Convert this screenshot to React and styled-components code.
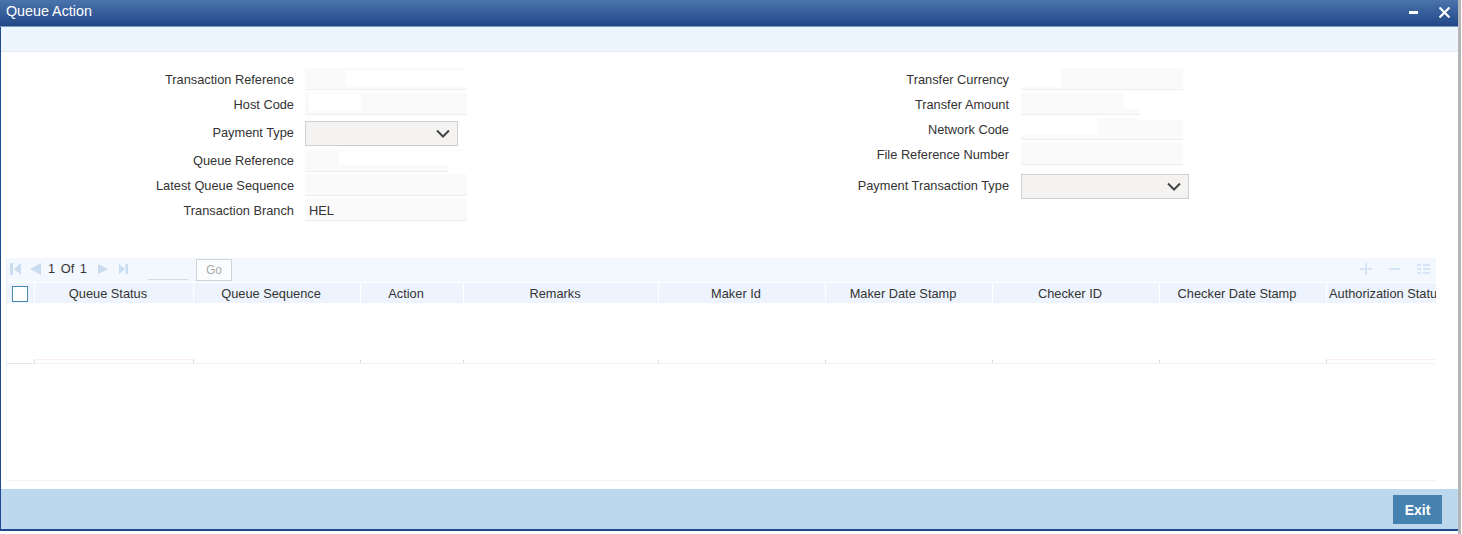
import styled, { createGlobalStyle } from 'styled-components'

const GlobalStyle = createGlobalStyle`
  html, body {
    margin: 0;
    padding: 0;
    background: #fff;
    font-family: "Liberation Sans", Arial, sans-serif;
    color: #333;
  }
`

const Page = styled.div`
  width: 1461px;
  height: 534px;
  box-sizing: border-box;
  overflow: hidden;
  border-right: 3px solid #b4b5b7;
`

const Window = styled.div`
  height: 531px;
  box-sizing: border-box;
  display: flex;
  flex-direction: column;
  border-left: 1px solid #1f4a8f;
  border-bottom: 2px solid #1f4a8f;
`

const TitleBar = styled.header`
  height: 27px;
  box-sizing: border-box;
  flex: none;
  margin-left: -1px;
  padding: 0 8px 4px 6px;
  display: flex;
  align-items: center;
  justify-content: space-between;
  background: linear-gradient(#4a74ab, #214888);
  border-bottom: 1px solid #7d9db5;
  color: #fff;
  font-size: 14.3px;
`

const WindowButtons = styled.div`
  display: flex;
  align-items: center;
  gap: 21px;
  margin-top: 3px;
`

const Band = styled.div`
  height: 24px;
  flex: none;
  background: #edf5fe;
  border-bottom: 1px solid #e4e8ed;
`

const Form = styled.section`
  height: 206px;
  flex: none;
  padding-top: 16px;
  box-sizing: border-box;
  display: flex;
`

const Column = styled.div`
  width: ${p => p.$width}px;
  flex: none;
  display: flex;
  flex-direction: column;
`

const Row = styled.div`
  height: ${p => p.$height}px;
  display: flex;
  align-items: flex-start;
`

const Label = styled.label`
  width: ${p => p.$width}px;
  flex: none;
  text-align: right;
  font-size: 12.8px;
  line-height: ${p => p.$line || 24}px;
  margin-right: ${p => p.$gap}px;
  color: #333;
`

const Field = styled.div`
  position: relative;
  width: 162px;
  height: 21px;
  background: #fafafa;
  border-bottom: 1px solid #eeeeee;
  font-size: 12.8px;
  line-height: 23px;
  color: #333;
  text-indent: 4px;
`

const Patch = styled.span`
  position: absolute;
  left: ${p => p.$left}px;
  top: ${p => p.$top}px;
  width: ${p => p.$width}px;
  height: ${p => p.$height}px;
  background: #fff;
`

const Select = styled.div`
  width: ${p => p.$width}px;
  height: 25px;
  box-sizing: border-box;
  background: #f4f3f1;
  border: 1px solid #cfcfcf;
  display: flex;
  align-items: center;
  justify-content: flex-end;
  padding-right: 7px;
  color: #444;
`

const GridPanel = styled.section`
  height: 223px;
  flex: none;
  margin-left: 5px;
  width: 1430px;
  box-sizing: border-box;
  border-left: 1px solid #eef0f9;
  border-bottom: 1px solid #f3f3fb;
`

const GridTools = styled.div`
  height: 24px;
  box-sizing: border-box;
  background: #f3f8fe;
  display: flex;
  align-items: center;
  padding: 0 6px 3px 3px;
  font-size: 12.8px;
  color: #333;
`

const ToolIcon = styled.svg`
  flex: none;
  margin-right: ${p => p.$gap || 0}px;
`

const PageCount = styled.span`
  word-spacing: 2px;
  white-space: nowrap;
  width: 38px;
  margin-right: 12px;
`

const PageBox = styled.span`
  width: 40px;
  height: 21px;
  box-sizing: border-box;
  border-bottom: 1px solid #d5dbe3;
  margin: 2px 8px 0 0;
`

const GoButton = styled.button`
  width: 36px;
  height: 22px;
  margin-top: 3px;
  padding: 0;
  background: #fbfcfd;
  border: 1px solid #ced4da;
  color: #aaa;
  font: 12px "Liberation Sans", Arial, sans-serif;
`

const ToolRight = styled.div`
  margin-left: auto;
  display: flex;
  align-items: center;
  gap: 17px;
`

const Head = styled.div`
  height: 20px;
  margin-top: 1px;
  display: flex;
  overflow: hidden;
`

const HeadCell = styled.div`
  width: ${p => p.$width}px;
  flex: none;
  margin-right: 1px;
  box-sizing: border-box;
  padding: ${p => (p.$clipped ? '0 0 0 2px' : '0 12px 0 0')};
  background: #edf4fd;
  text-align: ${p => (p.$clipped ? 'left' : 'center')};
  font-size: 12.8px;
  line-height: 22px;
  white-space: nowrap;
  overflow: hidden;
  color: #333;
`

const CheckCell = styled.div`
  width: 27px;
  flex: none;
  margin-right: 1px;
  box-sizing: border-box;
  padding: 2px 0 0 5px;
  display: flex;
  align-items: center;
  background: #edf4fd;
`

const Check = styled.span`
  width: 16px;
  height: 16px;
  box-sizing: border-box;
  background: #fff;
  border: 1px solid #4a86b4;
`

const EmptyRow = styled.div`
  height: 60px;
  display: flex;
  align-items: flex-end;
  border-bottom: 1px solid #fbeeee;
`

const Tick = styled.div`
  width: ${p => p.$width}px;
  flex: none;
  height: 3px;
  border-right: 1px solid ${p => (p.$end ? 'transparent' : '#d9dce8')};
  border-top: 1px solid ${p => (p.$marked ? '#fbeeee' : 'transparent')};
  box-shadow: ${p => (p.$first ? '0 1px 0 #e3e6f0' : 'none')};
`

const Footer = styled.footer`
  flex: 1;
  margin-top: 8px;
  background: #bdd8ec;
  display: flex;
  justify-content: flex-end;
  align-items: flex-start;
  padding: 6px 16px 0 0;
`

const ExitButton = styled.button`
  width: 49px;
  height: 29px;
  border: 0;
  padding: 0;
  background: #4682b0;
  color: #fff;
  font: bold 14px "Liberation Sans", Arial, sans-serif;
`

const leftRows = [
  { label: 'Transaction Reference', height: 25, patches: [[41, 2, 121, 17]] },
  { label: 'Host Code', height: 28, patches: [[4, 1, 52, 17]] },
  { label: 'Payment Type', height: 29, select: 153 },
  { label: 'Queue Reference', height: 24, line: 22, patches: [[34, 1, 128, 14], [143, 15, 19, 7]] },
  { label: 'Latest Queue Sequence', height: 25 },
  { label: 'Transaction Branch', height: 25, value: 'HEL' },
]

const rightRows = [
  { label: 'Transfer Currency', height: 25, patches: [[0, 0, 40, 19]] },
  { label: 'Transfer Amount', height: 25, patches: [[103, 0, 59, 16], [119, 16, 43, 6]] },
  { label: 'Network Code', height: 25, patches: [[0, 0, 77, 17], [119, 0, 43, 2]] },
  { label: 'File Reference Number', height: 31 },
  { label: 'Payment Transaction Type', height: 25, select: 168 },
]

const columns = [
  { name: 'Queue Status', width: 158, marked: true },
  { name: 'Queue Sequence', width: 166 },
  { name: 'Action', width: 102 },
  { name: 'Remarks', width: 194 },
  { name: 'Maker Id', width: 166 },
  { name: 'Maker Date Stamp', width: 166 },
  { name: 'Checker ID', width: 166 },
  { name: 'Checker Date Stamp', width: 166 },
  { name: 'Authorization Status', width: 109, marked: true, clipped: true },
]

function Chevron() {
  return (
    <svg width="14" height="9" viewBox="0 0 14 9" fill="none" stroke="#444" strokeWidth="2">
      <path d="M1 1.5l6 6 6-6" />
    </svg>
  )
}

function FormRow({ row, labelWidth, gap }) {
  return (
    <Row $height={row.height}>
      <Label $width={labelWidth} $gap={gap} $line={row.line}>{row.label}</Label>
      {row.select ? (
        <Select $width={row.select}><Chevron /></Select>
      ) : (
        <Field>
          {row.value}
          {(row.patches || []).map((p, i) => (
            <Patch key={i} $left={p[0]} $top={p[1]} $width={p[2]} $height={p[3]} />
          ))}
        </Field>
      )}
    </Row>
  )
}

function PagerIcon({ w, gap, d }) {
  return (
    <ToolIcon $gap={gap} width={w} height="12" viewBox={`0 0 ${w} 12`} fill="#c9dcf0">
      <path d={d} />
    </ToolIcon>
  )
}

export default function App() {
  return (
    <Page>
      <GlobalStyle />
      <Window>
        <TitleBar>
          <span>Queue Action</span>
          <WindowButtons>
            <svg width="9" height="3" viewBox="0 0 9 3"><rect width="9" height="3" fill="#fff" /></svg>
            <svg width="11" height="11" viewBox="0 0 11 11" stroke="#fff" strokeWidth="2.2"><path d="M.5.5l10 10M10.500.5l-10 10" /></svg>
          </WindowButtons>
        </TitleBar>
        <Band />
        <Form>
          <Column $width={716}>
            {leftRows.map(r => <FormRow key={r.label} row={r} labelWidth={293} gap={11} />)}
          </Column>
          <Column $width={700}>
            {rightRows.map(r => <FormRow key={r.label} row={r} labelWidth={292} gap={12} />)}
          </Column>
        </Form>
        <GridPanel>
          <GridTools>
            <PagerIcon w={11} gap={9} d="M0 0h3v12H0zM11 0v12L4 6z" />
            <PagerIcon w={11} gap={7} d="M11 0v12L0 6z" />
            <PageCount>1 Of 1</PageCount>
            <PagerIcon w={10} gap={11} d="M0 1v10l10-5z" />
            <PagerIcon w={9} gap={20} d="M0 1v10l6-5zM6.500 1H9v10H6.500z" />
            <PageBox />
            <GoButton>Go</GoButton>
            <ToolRight>
              <svg width="12" height="12" viewBox="0 0 12 12" stroke="#d5e4f6" strokeWidth="2"><path d="M6 0v12M0 6h12" /></svg>
              <svg width="11" height="12" viewBox="0 0 11 12" stroke="#d5e4f6" strokeWidth="2"><path d="M0 6h11" /></svg>
              <svg width="13" height="12" viewBox="0 0 13 12" stroke="#d5e4f6" strokeWidth="2"><path d="M0 2h4M6 2h7M0 6h4M6 6h7M0 10h4M6 10h7" /></svg>
            </ToolRight>
          </GridTools>
          <Head>
            <CheckCell><Check /></CheckCell>
            {columns.map(c => <HeadCell key={c.name} $width={c.width} $clipped={c.clipped}>{c.name}</HeadCell>)}
          </Head>
          <EmptyRow>
            <Tick $width={27} $first />
            {columns.map(c => <Tick key={c.name} $width={c.width} $marked={c.marked} $end={c.clipped} />)}
          </EmptyRow>
        </GridPanel>
        <Footer>
          <ExitButton>Exit</ExitButton>
        </Footer>
      </Window>
    </Page>
  )
}
